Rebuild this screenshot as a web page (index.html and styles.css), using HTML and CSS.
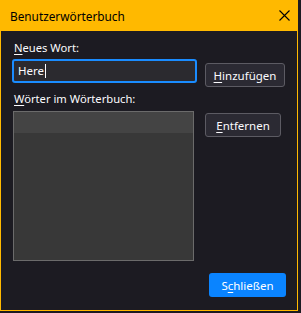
FILE: index.html
```html
<!DOCTYPE html>
<html lang="de">
<head>
<meta charset="utf-8">
<title>Benutzerwörterbuch</title>
<link rel="stylesheet" href="styles.css">
</head>
<body>

  <div class="fenster">

    <div class="titel">
      <span class="titel-text">Benutzerwörterbuch</span>
      <svg class="schliessen-x" width="11" height="11" viewBox="0 0 11 11">
        <path d="M0.5 0.5 L10.5 10.5 M10.5 0.5 L0.5 10.5" stroke="#000" stroke-width="1.1" fill="none"/>
      </svg>
    </div>

    <div class="inhalt">
      <div class="beschriftung"><u>N</u>eues Wort:</div>
      <div class="zeile">
        <div class="eingabe">Here<span class="cursor"></span></div>
        <button class="knopf knopf-hinzu"><u>H</u>inzufügen</button>
      </div>

      <div class="beschriftung beschriftung-2"><u>W</u>örter im Wörterbuch:</div>
      <div class="zeile">
        <div class="liste">
          <div class="liste-kopf"></div>
        </div>
        <button class="knopf knopf-entf"><u>E</u>ntfernen</button>
      </div>

      <div class="fuss">
        <button class="knopf knopf-blau">S<u>c</u>hließen</button>
      </div>
    </div>

  </div>

</body>
</html>
```

FILE: styles.css
```css
body {
  margin: 0;
  background-color: #1c1b22;
  font-family: "Noto Sans", "Open Sans", sans-serif;
  font-size: 11px;
  color: #fbfbfe;
}
.fenster {
  width: 298px;
  height: 311px;
  box-sizing: border-box;
  border: 1px solid #ffb900;
  border-top: none;
  background-color: #1c1b22;
  display: flex;
  flex-direction: column;
}
.titel {
  height: 31px;
  background-color: #ffb900;
  color: #000;
  display: flex;
  align-items: center;
  justify-content: space-between;
  padding: 0 7px 0 9px;
}
.titel-text {
  font-size: 11.8px;
  line-height: 16px;
  margin-top: 1px;
}
.inhalt {
  flex: 1;
  display: flex;
  flex-direction: column;
  padding: 9px 12px 0 11px;
}
.beschriftung {
  font-size: 11.2px;
  line-height: 16px;
  padding-left: 2px;
}
.beschriftung-2 {
  margin-top: 4px;
}
u {
  text-decoration-thickness: 1px;
  text-underline-offset: 2px;
}
.zeile {
  display: flex;
  gap: 8px;
  align-items: flex-start;
  margin-top: 3px;
}
.eingabe {
  width: 185px;
  height: 24px;
  box-sizing: border-box;
  border: 2px solid #1a8cff;
  border-radius: 3px;
  background-color: #2b2a2f;
  padding-left: 4px;
  line-height: 20px;
  font-size: 11.5px;
  display: flex;
  align-items: center;
}
.cursor {
  display: inline-block;
  width: 1px;
  height: 14px;
  background-color: #fbfbfe;
  margin-left: 1px;
}
.knopf {
  height: 24px;
  box-sizing: border-box;
  border: 1px solid #5c5b63;
  border-radius: 3px;
  background-color: #2b2a33;
  color: #fbfbfe;
  font-family: inherit;
  font-size: 11.5px;
  padding: 0;
}
.knopf-hinzu {
  width: 80px;
  margin-top: 4px;
}
.liste {
  width: 181px;
  height: 150px;
  box-sizing: border-box;
  border: 1px solid #6b6b6b;
  background-color: #383838;
  margin-top: 1px;
  margin-left: 1px;
}
.liste-kopf {
  height: 21px;
  background-color: #444444;
}
.knopf-entf {
  width: 76px;
  margin-top: 3px;
  margin-left: 3px;
}
.fuss {
  display: flex;
  justify-content: flex-end;
  margin-top: 12px;
  margin-right: -1px;
}
.knopf-blau {
  width: 77px;
  height: 24px;
  border: none;
  background-color: #0a84ff;
  color: #fff;
}
```
